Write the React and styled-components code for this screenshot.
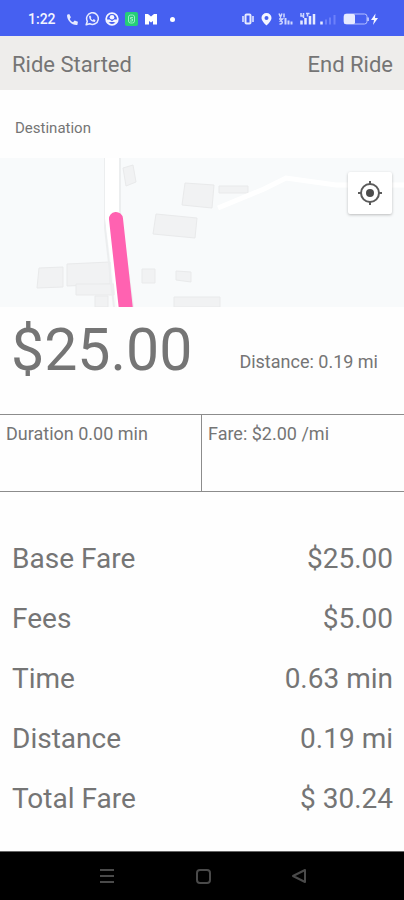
import React from "react";
import styled, { createGlobalStyle } from "styled-components";

const fares = [
  { label: "Base Fare", value: "$25.00" },
  { label: "Fees", value: "$5.00" },
  { label: "Time", value: "0.63 min" },
  { label: "Distance", value: "0.19 mi" },
  { label: "Total Fare", value: "$ 30.24" },
];

function StatusBar() {
  return (
    <StatusWrapper>
      <StatusGroup>
        <Clock>1:22</Clock>
        <svg width="13" height="13" viewBox="0 0 24 24" fill="#e6eaff">
          <path d="M6 2 2 3C1 13 11 23 21 22l1-6-6-2-3 3c-3-1-5-3-6-6l2-3z" />
        </svg>
        <svg width="14" height="14" viewBox="0 0 24 24" fill="none" stroke="#e6eaff">
          <path d="M2 22l2-6a10 10 0 1 1 4 4z" strokeWidth="2.6" strokeLinejoin="round" />
          <path
            d="M9 6 7 7c0 6 4 10 10 10l1-3-3-2-2 2c-1-1-3-2-3-4l1-1z"
            fill="#e6eaff"
            stroke="none"
          />
        </svg>
        <svg width="14" height="14" viewBox="0 0 24 24">
          <circle cx="12" cy="12" r="10" fill="none" stroke="#f4f6ff" strokeWidth="3" />
          <circle cx="12" cy="9" r="4" fill="#f4f6ff" />
          <path d="M2 13h6l4 3 4-3h6l-3 6-4-2H9l-4 2z" fill="#f4f6ff" />
        </svg>
        <svg width="13" height="14" viewBox="0 0 26 28" fill="none">
          <rect width="26" height="28" rx="4" fill="#25cf78" />
          <rect x="7" y="6" width="12" height="16" rx="4" stroke="#9af0c4" strokeWidth="2" />
          <path d="M16 11h-5v3h4v4h-5" stroke="#9af0c4" strokeWidth="2" />
        </svg>
        <svg width="14" height="12" viewBox="0 0 28 24" fill="#ffffff">
          <path d="M2 2h6l6 5 6-5h6v21h-8v-7l-4 3-4-3v7H2z" />
        </svg>
        <Dot />
      </StatusGroup>
      <StatusGroup>
        <svg width="14" height="14" viewBox="0 0 28 28" fill="none" stroke="#e6eaff">
          <rect x="9" y="5" width="10" height="18" rx="2" strokeWidth="4" />
          <path d="M4 8v12M24 8v12" strokeWidth="3" />
        </svg>
        <svg width="11" height="14" viewBox="0 0 22 28" fill="#f4f6ff" fillRule="evenodd">
          <path d="M11 2a10 10 0 0 1 10 10c0 6-10 15-10 15S1 18 1 12A10 10 0 0 1 11 2zm0 6a4 4 0 1 0 0 8 4 4 0 0 0 0-8z" />
        </svg>
        <svg width="15" height="14" viewBox="0 0 30 28" fill="none" stroke="#cfd7ff">
          <path d="M2 3l3 7 3-7M12 3v8M2 14h7l-4 4c5 0 5 7-2 6" strokeWidth="3" />
          <path d="M15 12v13M21 17v8M27 19v6" strokeWidth="4" />
        </svg>
        <svg width="38" height="14" viewBox="0 0 76 28" fill="none">
          <path d="M4 2v6h5M9 2v10M14 3h7M17 3v6" stroke="#cfd7ff" strokeWidth="3" />
          <path d="M5 17v8M13 12v13M22 8v17M30 4v21M45 19v6" stroke="#e6eaff" strokeWidth="5" />
          <path d="M54 15v10M62 11v14M71 6v19" stroke="#6c80fa" strokeWidth="4" />
        </svg>
        <svg width="36" height="14" viewBox="0 0 72 28">
          <rect x="2" y="4" width="46" height="20" rx="5" fill="none" stroke="#b5c0ff" strokeWidth="2" />
          <rect x="2" y="4" width="22" height="20" rx="3" fill="#e6eaff" />
          <path d="M50 11v7" stroke="#b5c0ff" strokeWidth="4" />
          <path d="M65 3 56 16h6l-2 10 10-14h-6z" fill="#f4f6ff" />
        </svg>
      </StatusGroup>
    </StatusWrapper>
  );
}

function Map() {
  return (
    <MapWrapper>
      <MapDrawing viewBox="0 0 404 149" preserveAspectRatio="xMidYMid slice">
        <g fill="#f1f2f3" stroke="#e9eaeb">
          <path d="M123 10l10-3 3 17-10 4z" />
          <path d="M185 25l29 2-2 23-30-3z" />
          <path d="M219 28h29v7h-29z" />
          <path d="M156 56l41 4-2 20-42-4z" />
          <path d="M39 110l24-1v20l-26 1z" />
          <path d="M67 106l43-2v22l-43 2z" />
          <path d="M76 126h38v11H76z" />
          <path d="M95 138h13v11H95z" />
          <path d="M142 111h13v14h-13z" />
          <path d="M176 113l15 1v10l-15-2z" />
          <path d="M174 139h46v10h-46z" />
        </g>
        <path d="M105 0v70l9 79M120 0v54l13 95" fill="none" stroke="#eceeef" strokeWidth="2" />
        <path d="M112 0v60l12 89" fill="none" stroke="#ffffff" strokeWidth="14" />
        <path
          d="M218 50l46-19 22-11 50 7h68"
          fill="none"
          stroke="#ffffff"
          strokeWidth="5"
        />
        <path
          d="M116 61l11 100"
          fill="none"
          stroke="#ff62b1"
          strokeWidth="14"
          strokeLinecap="round"
        />
      </MapDrawing>
      <LocateButton aria-label="My location">
        <svg width="24" height="24" viewBox="0 0 24 24" fill="none" stroke="#5b5b5b">
          <circle cx="12" cy="12" r="9" strokeWidth="2" />
          <circle cx="12" cy="12" r="4" fill="#4b4b4b" stroke="none" />
          <path d="M12 0v4M12 20v4M0 12h4M20 12h4" strokeWidth="2" />
        </svg>
      </LocateButton>
    </MapWrapper>
  );
}

function App() {
  return (
    <Screen>
      <GlobalStyle />
      <StatusBar />
      <Header>
        <Title>Ride Started</Title>
        <EndButton>End Ride</EndButton>
      </Header>
      <Destination>Destination</Destination>
      <Map />
      <Summary>
        <Price>$25.00</Price>
        <Distance>Distance: 0.19 mi</Distance>
      </Summary>
      <Rates>
        <Rate>Duration 0.00 min</Rate>
        <Rate>Fare: $2.00 /mi</Rate>
      </Rates>
      <FareList>
        {fares.map((fare) => (
          <FareRow key={fare.label}>
            <dt>{fare.label}</dt>
            <dd>{fare.value}</dd>
          </FareRow>
        ))}
      </FareList>
      <NavBar>
        <NavButton aria-label="Recent apps">
          <svg width="16" height="16" viewBox="0 0 16 16">
            <path d="M1 2h14M1 8h14M1 14h14" />
          </svg>
        </NavButton>
        <NavButton aria-label="Home">
          <svg width="16" height="16" viewBox="0 0 16 16">
            <rect x="2" y="2" width="13" height="13" rx="3" />
          </svg>
        </NavButton>
        <NavButton aria-label="Back">
          <svg width="16" height="16" viewBox="0 0 16 16">
            <path d="M2 8l12-6v12z" strokeLinejoin="round" />
          </svg>
        </NavButton>
      </NavBar>
    </Screen>
  );
}

const GlobalStyle = createGlobalStyle`
  * {
    box-sizing: border-box;
  }

  body {
    margin: 0;
    background: #fefefe;
    color: #757575;
    font-family: Roboto, sans-serif;
  }

  button {
    border: 0;
    padding: 0;
    background: none;
    color: inherit;
    font: inherit;
    cursor: pointer;
  }
`;

const Screen = styled.div`
  display: flex;
  flex-direction: column;
  min-height: 100vh;
`;

const StatusWrapper = styled.div`
  display: flex;
  align-items: center;
  justify-content: space-between;
  height: 36px;
  padding: 2px 25px 0 28px;
  background: #4660f1;
`;

const StatusGroup = styled.div`
  display: flex;
  align-items: center;
  gap: 6px;
`;

const Clock = styled.span`
  margin-right: 4px;
  color: #f4f6ff;
  font-size: 14px;
  font-weight: 500;
`;

const Dot = styled.span`
  width: 5px;
  height: 5px;
  margin-left: 6px;
  border-radius: 50%;
  background: #ffffff;
`;

const Header = styled.header`
  display: flex;
  align-items: center;
  justify-content: space-between;
  height: 54px;
  padding: 2px 11px 0 12px;
  background: #eeedeb;
`;

const Title = styled.h1`
  margin: 0;
  font-size: 22px;
  font-weight: 400;
`;

const EndButton = styled.button`
  font-size: 22px;
`;

const Destination = styled.div`
  padding: 28px 15px 20px;
  font-size: 15px;
  line-height: 20px;
`;

const MapWrapper = styled.div`
  position: relative;
  height: 149px;
  background: #f8fafb;
`;

const MapDrawing = styled.svg`
  display: block;
  width: 100%;
  height: 100%;
`;

const LocateButton = styled.button`
  position: absolute;
  top: 14px;
  right: 12px;
  display: flex;
  align-items: center;
  justify-content: center;
  width: 44px;
  height: 42px;
  border-radius: 2px;
  background: #ffffff;
  box-shadow: 0 1px 3px rgba(0, 0, 0, 0.25);
`;

const Summary = styled.section`
  display: flex;
  align-items: flex-start;
  justify-content: space-between;
  height: 107px;
  padding: 8px 26px 0 11px;
`;

const Price = styled.div`
  font-size: 59px;
  line-height: 70px;
`;

const Distance = styled.div`
  margin-top: 36px;
  font-size: 18px;
  line-height: 22px;
`;

const Rates = styled.section`
  display: grid;
  grid-template-columns: 1fr 1fr;
  border-top: 1px solid #8c8c8c;
  border-bottom: 1px solid #8c8c8c;
`;

const Rate = styled.div`
  height: 76px;
  padding: 8px 6px;
  font-size: 18px;
  line-height: 22px;

  &:first-child {
    border-right: 1px solid #8c8c8c;
  }
`;

const FareList = styled.dl`
  margin: 36px 0 23px;
  padding: 0 11px 0 12px;
`;

const FareRow = styled.div`
  display: flex;
  align-items: center;
  justify-content: space-between;
  height: 60px;
  font-size: 28px;

  dd {
    margin: 0;
  }
`;

const NavBar = styled.nav`
  display: flex;
  align-items: center;
  justify-content: center;
  gap: 64px;
  height: 49px;
  margin-top: auto;
  padding-left: 2px;
  border-top: 1px solid #666666;
  background: #000000;
`;

const NavButton = styled.button`
  display: flex;
  justify-content: center;
  width: 32px;

  svg {
    fill: none;
    stroke: #4a4a4a;
    stroke-width: 2;
  }
`;

export default App;
